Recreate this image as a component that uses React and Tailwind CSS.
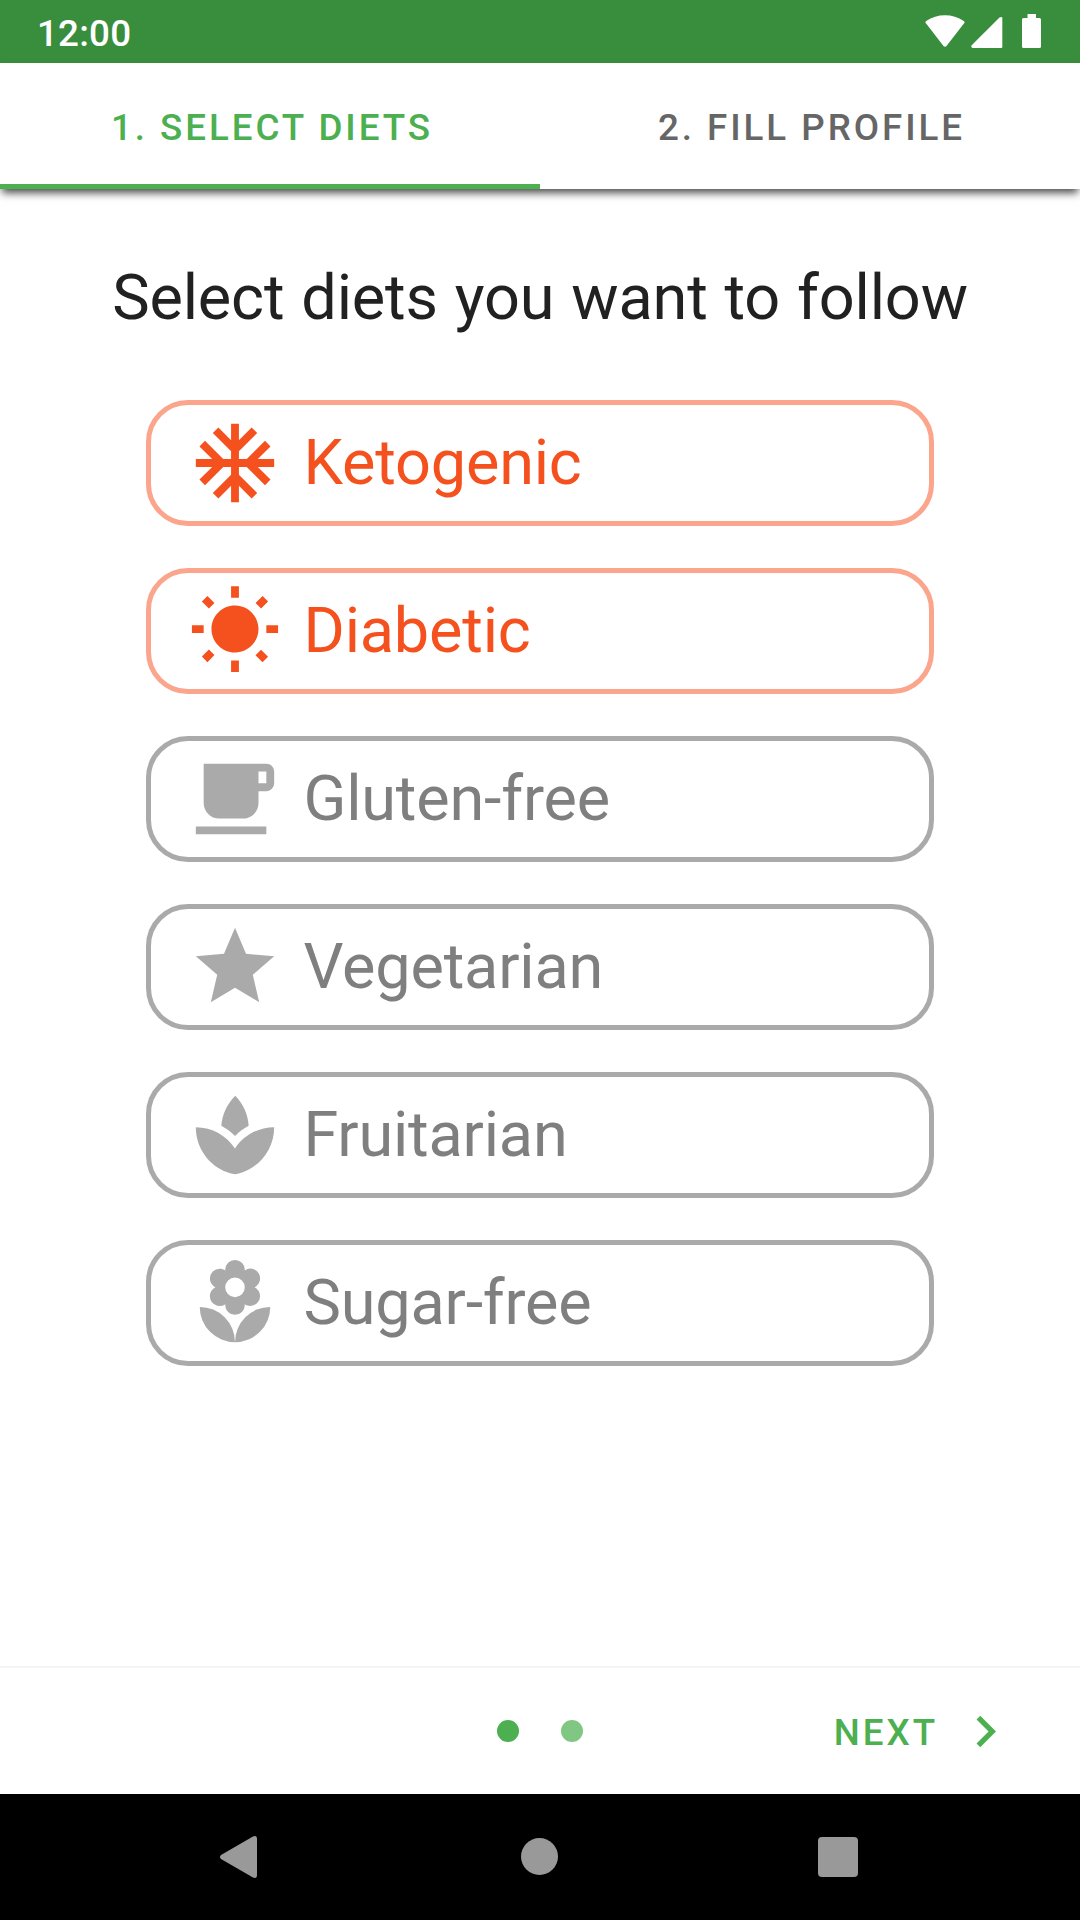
import { MdAcUnit, MdWbSunny, MdStar, MdLocalFlorist } from "react-icons/md";

function LeafIcon({ className }) {
  return (
    <svg viewBox="0 0 24 24" fill="currentColor" className={className}>
      <path d="M15.49 9.63c-.18-2.79-1.31-5.51-3.43-7.63-2.14 2.14-3.32 4.86-3.55 7.63 1.28.68 2.46 1.56 3.49 2.63 1.03-1.06 2.21-1.94 3.49-2.63z" />
      <path d="M12 15.45C9.85 12.17 6.18 10 2 10c0 5.32 3.36 9.82 8.03 11.49.63.23 1.29.4 1.97.51.68-.12 1.33-.29 1.97-.51C18.64 19.82 22 15.32 22 10c-4.18 0-7.85 2.17-10 5.45z" />
    </svg>
  );
}

function CupIcon({ className }) {
  return (
    <svg viewBox="0 0 24 24" fill="currentColor" className={className}>
      <path d="M20 3H4v10c0 2.210 1.790 4 4 4h6c2.210 0 4-1.790 4-4v-3h2c1.110 0 2-.9 2-2V5c0-1.110-.89-2-2-2zm0 5h-2V5h2v3zM2 21h18v-2H2v2z" />
    </svg>
  );
}

const diets = [
  { name: "Ketogenic", Icon: MdAcUnit, selected: true },
  { name: "Diabetic", Icon: MdWbSunny, selected: true },
  { name: "Gluten-free", Icon: CupIcon, selected: false },
  { name: "Vegetarian", Icon: MdStar, selected: false },
  { name: "Fruitarian", Icon: LeafIcon, selected: false },
  { name: "Sugar-free", Icon: MdLocalFlorist, selected: false },
];

function StatusBar() {
  return (
    <div className="flex h-[63px] shrink-0 items-start justify-between bg-[#388e3c] pl-[37px] pr-[38px] text-white">
      <span className="pt-[12px] text-[36.75px] leading-[44px] font-medium tracking-[0.2px]">12:00</span>
      <div className="flex pt-[14px]">
        <svg width="40" height="34" viewBox="0 0 40 34" fill="currentColor">
          <path d="M1.100 9.600Q-.4 8.200 1.200 7C6.800 3.200 13.200 1.200 20 1.200S33.200 3.200 38.800 7Q40.400 8.200 38.900 9.600L21.500 32Q20 33.600 18.500 32Z" />
        </svg>
        <svg width="32" height="34" viewBox="0 0 32 34" fill="currentColor" className="ml-[6px]">
          <path d="M28.500 3.600Q30.200 2.400 31.300 3.500V33Q31.300 34 30.300 34H1.500Q-.5 33 .7 31.300Z" />
        </svg>
        <svg width="20" height="34" viewBox="0 0 20 34" fill="currentColor" className="ml-[19px]">
          <path d="M5.500 0h8.500v4h3.500q1.500 0 1.500 1.500v27q0 1.500-1.500 1.500h-16Q0 34 0 32.500v-27Q0 4 1.500 4h4z" />
        </svg>
      </div>
    </div>
  );
}

function Tabs() {
  return (
    <div className="relative z-10 flex h-[126px] shrink-0 bg-white text-[36.75px] font-medium tracking-[2.95px] shadow-[0_6px_8px_-2px_rgba(0,0,0,0.7)]">
      <div className="flex w-1/2 items-center justify-center border-b-[5px] border-[#4caf50] pt-[8px] pl-[4px] text-[#4caf50]">1. SELECT DIETS</div>
      <div className="flex w-1/2 items-center justify-center pt-[3px] pl-[3px] text-[#666666]">2. FILL PROFILE</div>
    </div>
  );
}

function DietCard({ name, Icon, selected }) {
  return (
    <div
      className={
        "flex h-[126px] w-full items-center gap-[21.5px] rounded-[42px] border-[5px] pl-[37px] " +
        (selected ? "border-[#faa58c] text-[#f4511e]" : "border-[#aaaaaa] text-[#aaaaaa]")
      }
    >
      <Icon className="size-[94px] shrink-0" />
      <span
        className={
          "text-[63px] leading-[74px] tracking-[-0.2px] " + (selected ? "text-[#f4511e]" : "text-[#7f7f7f]")
        }
      >
        {name}
      </span>
    </div>
  );
}

function BottomBar() {
  return (
    <div className="grid h-[128px] shrink-0 grid-cols-3 items-center border-t-2 border-[#f4f4f4] text-[#4caf50]">
      <div />
      <div className="flex justify-center gap-[42px]">
        <div className="size-[22px] rounded-full bg-[#4caf50]" />
        <div className="size-[22px] rounded-full bg-[#81c784]" />
      </div>
      <div className="flex items-center justify-end gap-[16px] pr-[63px]">
        <span className="pt-[3px] text-[36.75px] font-medium tracking-[2.95px]">NEXT</span>
        <svg viewBox="0 0 24 24" fill="currentColor" className="size-[63px]">
          <path d="M10 6L8.590 7.410 13.170 12l-4.580 4.590L10 18l6-6z" />
        </svg>
      </div>
    </div>
  );
}

function NavBar() {
  return (
    <div className="flex h-[126px] shrink-0 items-center justify-between bg-black pb-[1px] pl-[220px] pr-[222px] text-[#999999]">
      <svg width="38" height="42" viewBox="0 0 38 42" fill="currentColor">
        <path d="M33 .5Q37 -1 37 3V39Q37 43 33 41.500L1 23Q-1 21 1 19Z" />
      </svg>
      <div className="ml-[2px] size-[37px] rounded-full bg-[#999999]" />
      <div className="size-[40px] rounded-[4px] bg-[#999999]" />
    </div>
  );
}

export default function App() {
  return (
    <div className="flex h-[1920px] w-[1080px] flex-col overflow-hidden bg-white font-[Roboto,sans-serif]">
      <StatusBar />
      <Tabs />
      <main className="flex flex-1 flex-col items-center pt-[72px]">
        <h1 className="text-[63px] leading-[74px] tracking-[-0.15px] text-[#212121] [word-spacing:1.4px]">Select diets you want to follow</h1>
        <div className="mt-[65px] flex w-[788px] flex-col gap-[42px]">
          {diets.map((diet) => (
            <DietCard key={diet.name} {...diet} />
          ))}
        </div>
      </main>
      <BottomBar />
      <NavBar />
    </div>
  );
}
